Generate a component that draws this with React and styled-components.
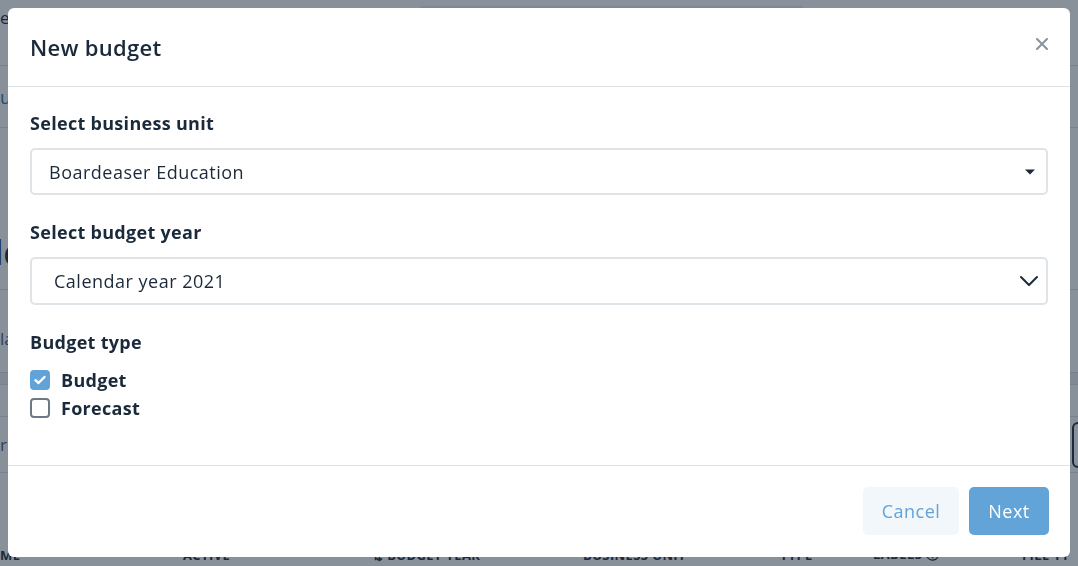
import React from "react";
import styled, { createGlobalStyle } from "styled-components";

const GlobalStyle = createGlobalStyle`
  html, body {
    margin: 0;
    padding: 0;
    width: 1078px;
    height: 566px;
    overflow: hidden;
    font-family: "Open Sans", "Noto Sans", sans-serif;
    color: #1b2a3b;
  }
  * { box-sizing: border-box; }
`;

/* ---------- page behind the dialog ---------- */

const Page = styled.div`
  width: 1078px;
  height: 566px;
  background: #ffffff;
  display: flex;
  flex-direction: column;
`;

const TopBar = styled.div`
  height: 66px;
  display: flex;
  align-items: flex-start;
  padding-top: 6px;
  border-bottom: 1px solid #d9dfe5;
  font-size: 17px;
`;

const TopTab = styled.div`
  width: 383px;
  height: 8px;
  margin-left: 410px;
  background: #e4eef6;
`;

const NavRow = styled.div`
  height: 62px;
  display: flex;
  align-items: center;
  color: #2c6fad;
  font-size: 18px;
  border-bottom: 1px solid #d9dfe5;
`;

const PageTitle = styled.div`
  height: 162px;
  padding-top: 86px;
  display: flex;
  align-items: center;
  font-size: 34px;
  font-weight: 700;
  border-bottom: 1px solid #d9dfe5;
  margin-left: -7px;
`;

const PageRow = styled.div`
  height: ${(p) => p.$h}px;
  padding-top: ${(p) => p.$top || 0}px;
  display: flex;
  align-items: center;
  font-size: 17px;
  color: #4a5868;
  background: ${(p) => (p.$band ? "#eef1f4" : "transparent")};
  border-bottom: 1px solid #d9dfe5;
  justify-content: space-between;
`;

const GhostButton = styled.div`
  width: 40px;
  height: 46px;
  margin-right: -34px;
  border: 2px solid #1b2a3b;
  border-radius: 6px;
`;

const TableHead = styled.div`
  flex: 1;
  display: grid;
  grid-template-columns: 183px 189px 211px 197px 93px 149px 56px;
  align-items: end;
  padding-bottom: 2px;
  font-size: 13px;
  font-weight: 700;
  letter-spacing: 0.4px;
  text-transform: uppercase;
  white-space: nowrap;
  overflow: hidden;
`;

/* ---------- dialog ---------- */

const Overlay = styled.div`
  position: fixed;
  inset: 0;
  background: rgba(27, 42, 59, 0.52);
  padding: 8px;
  display: flex;
`;

const Modal = styled.div`
  width: 1062px;
  height: 549px;
  background: #ffffff;
  border-radius: 6px;
  display: flex;
  flex-direction: column;
  overflow: hidden;
`;

const Header = styled.div`
  height: 79px;
  flex-shrink: 0;
  display: flex;
  align-items: center;
  justify-content: space-between;
  padding: 0 22px;
  border-bottom: 1px solid #dfe4e8;
`;

const Title = styled.h2`
  margin: 0;
  font-size: 22px;
  font-weight: 600;
  letter-spacing: 0.3px;
  color: #1b2a3b;
`;

const CloseButton = styled.button`
  border: 0;
  background: none;
  padding: 0;
  width: 16px;
  height: 16px;
  display: flex;
  align-items: center;
  justify-content: center;
  cursor: pointer;
  margin-top: -6px;
  margin-right: -2px;
`;

const Body = styled.div`
  flex: 1;
  padding: 24px 22px 0;
  border-bottom: 1px solid #dfe4e8;
`;

const Label = styled.div`
  font-size: 18px;
  font-weight: 700;
  line-height: 24px;
  letter-spacing: 0.3px;
  margin-bottom: ${(p) => p.$gap}px;
`;

const SelectBox = styled.div`
  height: ${(p) => p.$h}px;
  border: 2px solid #dfe4e8;
  border-radius: 5px;
  display: flex;
  align-items: center;
  justify-content: space-between;
  padding: 0 ${(p) => p.$right}px 0 ${(p) => p.$left}px;
  font-size: 18px;
  letter-spacing: 0.5px;
  margin-bottom: 25px;
`;

const CheckRow = styled.label`
  height: 28px;
  display: flex;
  align-items: center;
  gap: 11px;
  font-size: 18px;
  font-weight: 700;
  letter-spacing: 0.3px;
`;

const Box = styled.span`
  width: 20px;
  height: 20px;
  border-radius: 4px;
  display: flex;
  align-items: center;
  justify-content: center;
  background: ${(p) => (p.$on ? "#61a3d8" : "#ffffff")};
  border: 2px solid ${(p) => (p.$on ? "#61a3d8" : "#6b7886")};
`;

const Footer = styled.div`
  height: 91px;
  flex-shrink: 0;
  display: flex;
  align-items: center;
  justify-content: flex-end;
  gap: 10px;
  padding: 0 21px 1px;
`;

const Button = styled.button`
  height: 48px;
  width: ${(p) => p.$w}px;
  padding: 0;
  border: 0;
  border-radius: 5px;
  font-family: inherit;
  font-size: 18px;
  letter-spacing: 0.5px;
  background: ${(p) => (p.$primary ? "#62a4d8" : "#f2f7fc")};
  color: ${(p) => (p.$primary ? "#ffffff" : "#62a4d8")};
  cursor: pointer;
`;

function Check({ on, children }) {
  return (
    <CheckRow>
      <Box $on={on}>
        {on && (
          <svg width="12" height="10" viewBox="0 0 12 10">
            <path d="M1.5 5.2 L4.5 8 L10.5 2" fill="none" stroke="#fff" strokeWidth="2.4" strokeLinecap="round" strokeLinejoin="round" />
          </svg>
        )}
      </Box>
      {children}
    </CheckRow>
  );
}

export default function App() {
  return (
    <>
      <GlobalStyle />
      <Page>
        <TopBar>
          <span>e</span>
          <TopTab />
        </TopBar>
        <NavRow>u</NavRow>
        <PageTitle>lc</PageTitle>
        <PageRow $h={83} $top={14}>la</PageRow>
        <PageRow $h={12} $band />
        <PageRow $h={32} />
        <PageRow $h={56}>
          r
          <GhostButton />
        </PageRow>
        <TableHead>
          <span>me</span>
          <span>Active</span>
          <span>⇅ Budget year</span>
          <span>Business unit</span>
          <span>Type</span>
          <span>Labels ⓘ</span>
          <span>File ty</span>
        </TableHead>
      </Page>

      <Overlay>
        <Modal role="dialog">
          <Header>
            <Title>New budget</Title>
            <CloseButton aria-label="Close">
              <svg width="12" height="12" viewBox="0 0 12 12">
                <path d="M1 1 L11 11 M11 1 L1 11" stroke="#8a929a" strokeWidth="2" strokeLinecap="round" />
              </svg>
            </CloseButton>
          </Header>
          <Body>
            <Label $gap={13}>Select business unit</Label>
            <SelectBox $h={47} $left={17} $right={10}>
              Boardeaser Education
              <svg width="12" height="6" viewBox="0 0 12 6">
                <path d="M1 0.5 H11 L6 5.5 Z" fill="#1b2a3b" />
              </svg>
            </SelectBox>
            <Label $gap={13}>Select budget year</Label>
            <SelectBox $h={48} $left={22} $right={7}>
              Calendar year 2021
              <svg width="20" height="12" viewBox="0 0 20 12">
                <path d="M2 2 L10 10 L18 2" fill="none" stroke="#1b2a3b" strokeWidth="2" strokeLinecap="round" strokeLinejoin="round" />
              </svg>
            </SelectBox>
            <Label $gap={12}>Budget type</Label>
            <Check on>Budget</Check>
            <Check>Forecast</Check>
          </Body>
          <Footer>
            <Button $w={96}>Cancel</Button>
            <Button $primary $w={80}>Next</Button>
          </Footer>
        </Modal>
      </Overlay>
    </>
  );
}
